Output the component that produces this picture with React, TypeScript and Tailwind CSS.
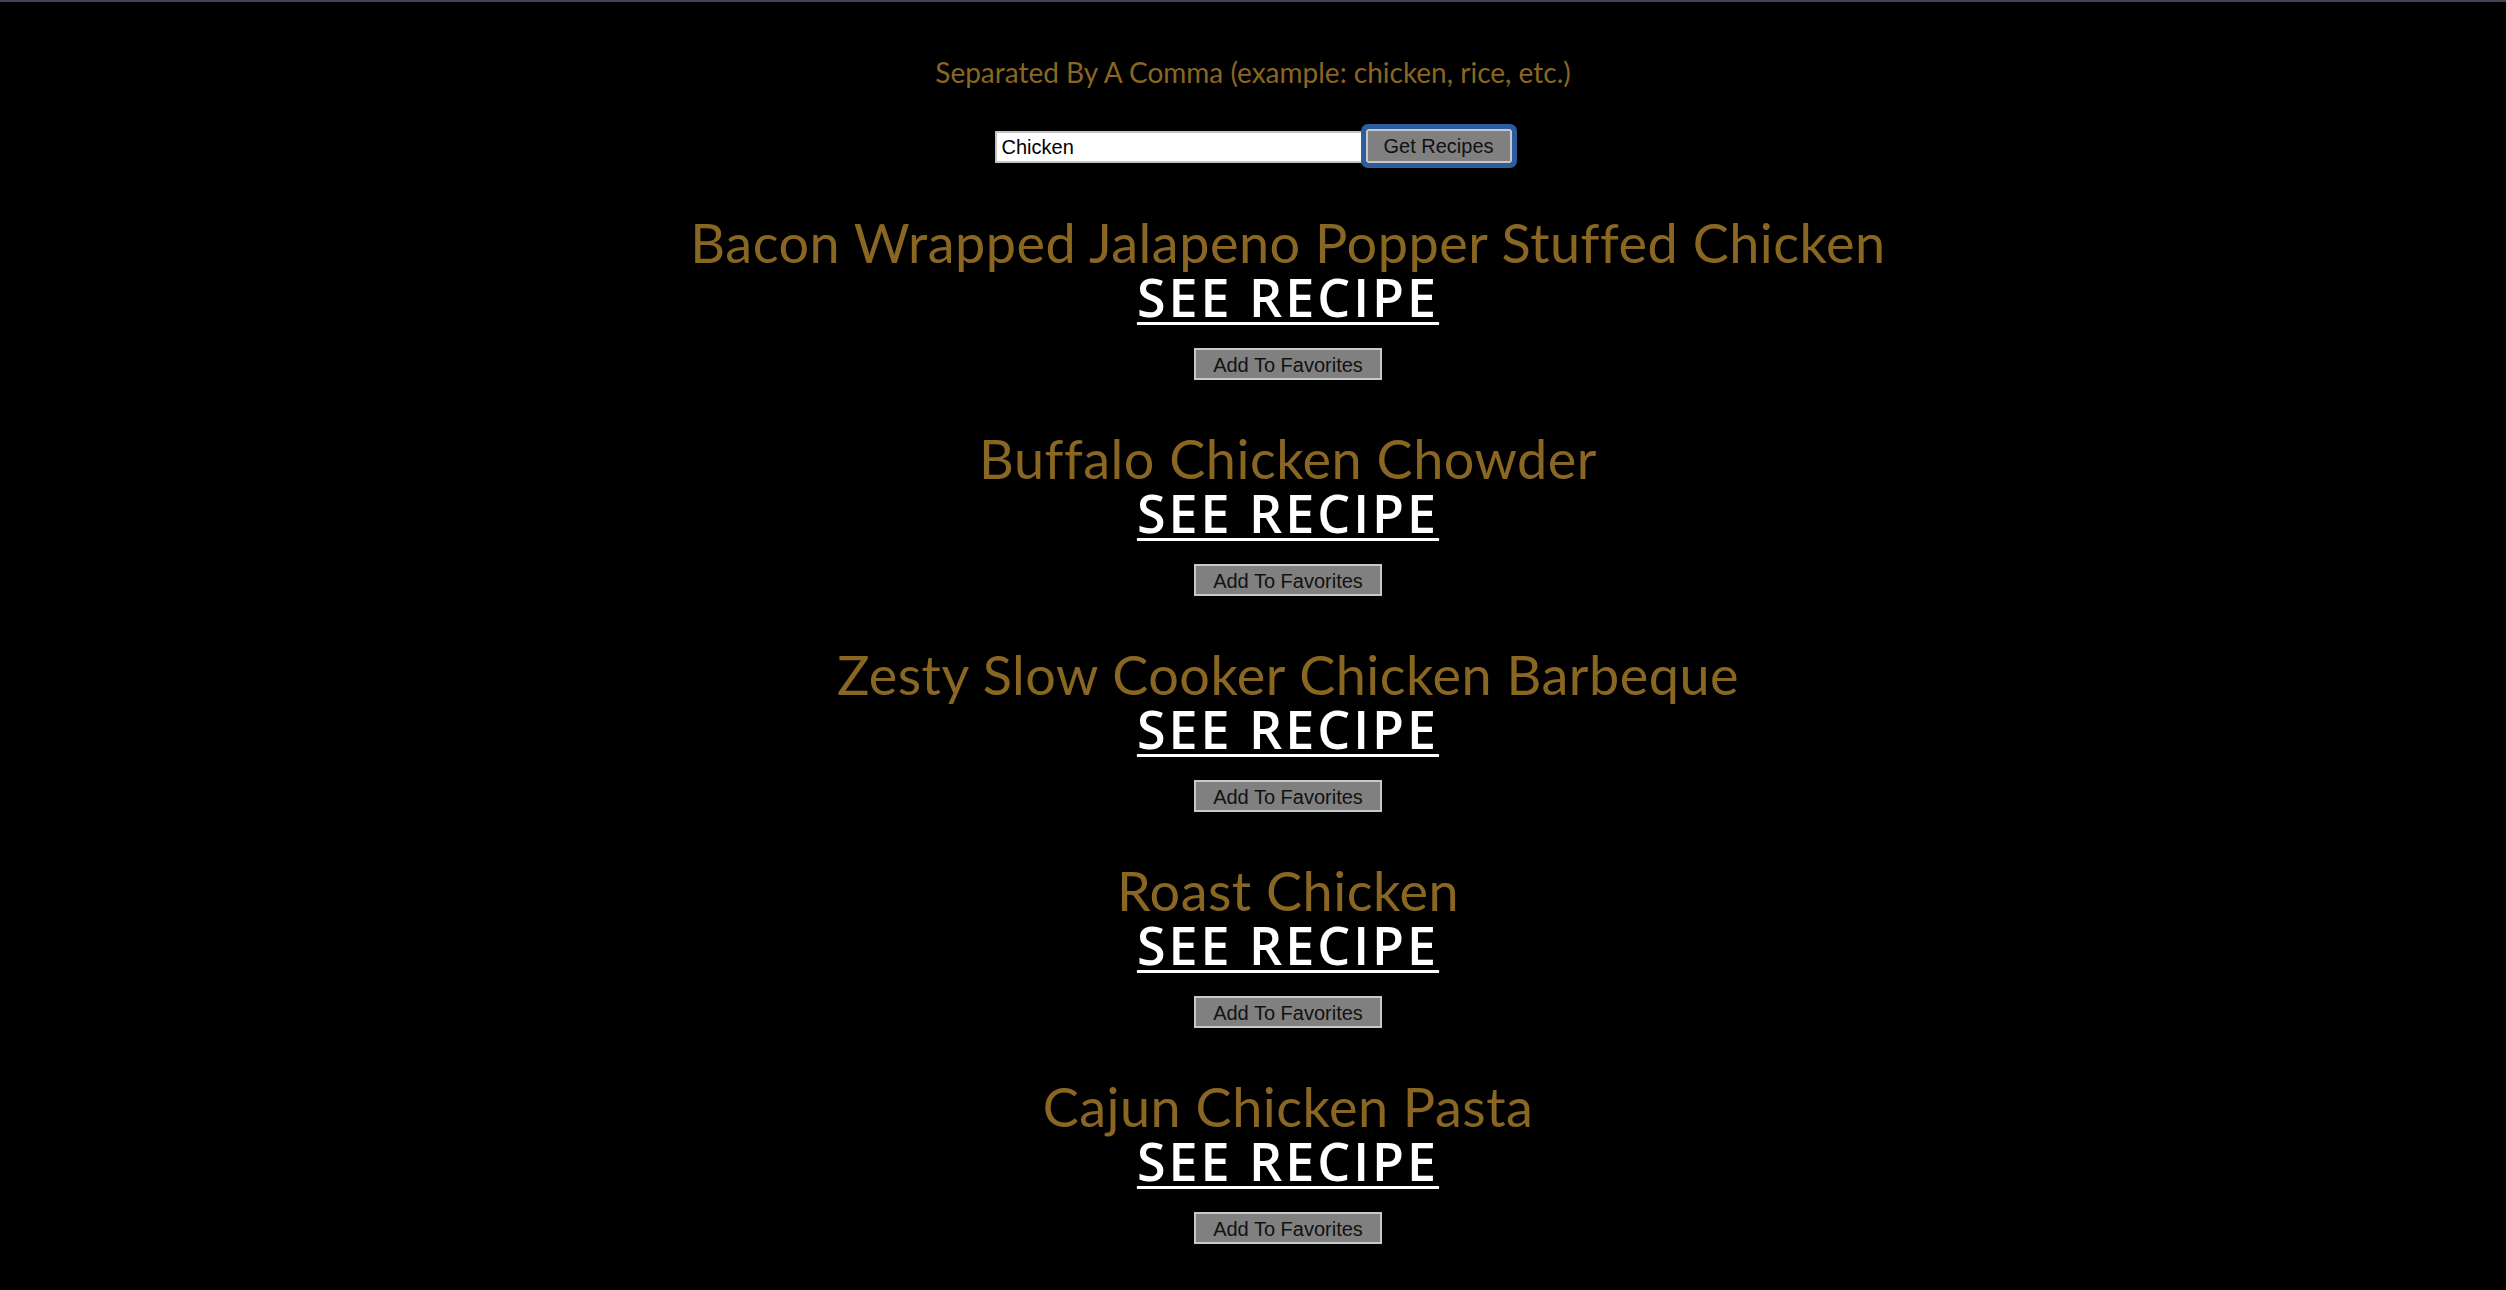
const recipes = [
  "Bacon Wrapped Jalapeno Popper Stuffed Chicken",
  "Buffalo Chicken Chowder",
  "Zesty Slow Cooker Chicken Barbeque",
  "Roast Chicken",
  "Cajun Chicken Pasta",
];

export default function App() {
  return (
    <div className="min-h-screen bg-black border-t-2 border-[#4a4158] flex flex-col items-center font-['Lato',sans-serif]">
      <p className="mt-[56px] text-[28px] leading-none text-[#8a6623]">
        Separated By A Comma (example: chicken, rice, etc.)
      </p>

      <form className="mt-[43px] flex items-end" onSubmit={(e) => e.preventDefault()}>
        <input
          defaultValue="Chicken"
          className="w-[368px] h-[32px] bg-white border-2 border-[#c4c4c4] px-[5px] text-[20px] text-black font-['Liberation_Sans',sans-serif] outline-none"
        />
        <button
          type="submit"
          className="ml-[3px] w-[146px] h-[34px] bg-[#808080] border-2 border-[#c8c8c8] rounded-[2px] text-[20px] text-[#111] font-['Liberation_Sans',sans-serif] outline-[5px] outline-solid outline-[#2c5e9e]"
        >
          Get Recipes
        </button>
      </form>

      <div className="mt-[53px] pl-[70px] flex flex-col items-center gap-[52px]">
        {recipes.map((r) => (
          <div key={r} className="flex flex-col items-center">
            <h2 className="text-[54px] leading-none tracking-[0.5px] text-[#8a6623]">{r}</h2>
            <a
              href="#"
              className="mt-[7px] block text-[52px] leading-[40px] tracking-[3px] font-semibold text-white font-['Open_Sans',sans-serif] underline decoration-[3px] underline-offset-[5px]"
            >
              SEE RECIPE
            </a>
            <button className="mt-[31px] w-[188px] h-[32px] bg-[#808080] border-2 border-[#c8c8c8] text-[20px] text-[#111] font-['Liberation_Sans',sans-serif]">
              Add To Favorites
            </button>
          </div>
        ))}
      </div>
    </div>
  );
}
